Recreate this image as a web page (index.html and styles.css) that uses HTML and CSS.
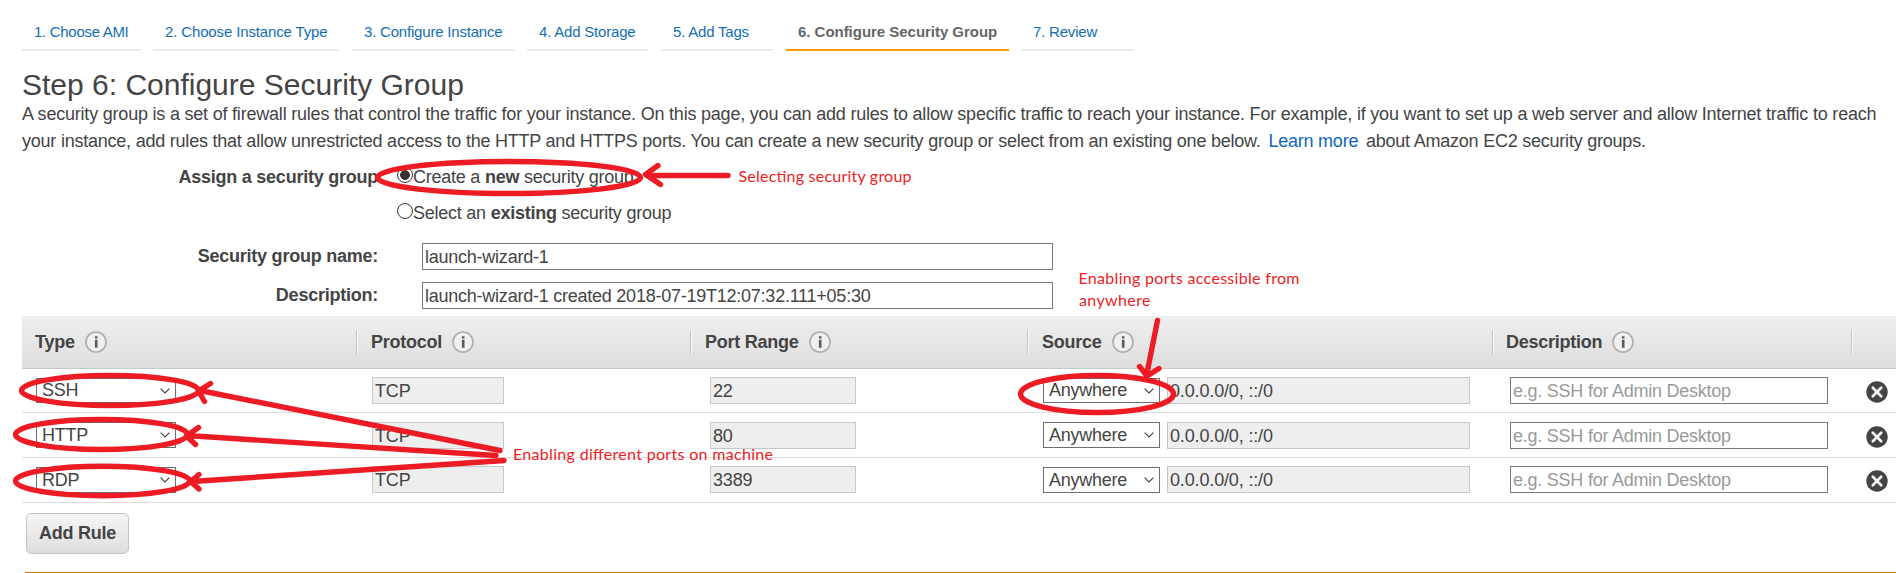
FILE: index.html
```html
<!DOCTYPE html>
<html lang="en">
<head>
<meta charset="utf-8">
<title>Step 6: Configure Security Group</title>
<link rel="stylesheet" href="styles.css">
</head>
<body>
<svg class="defs" width="0" height="0">
  <symbol id="info" viewBox="0 0 22 22"><circle cx="11" cy="11" r="10" fill="#efefef" stroke="#adadad" stroke-width="1.6"/><path d="M9.9 5.2h2.6v2.2H9.9zM9.9 8.8h2.6v8H9.9z" fill="#5a5a5a"/></symbol>
  <symbol id="remove" viewBox="0 0 22 22"><circle cx="11" cy="11" r="10.7" fill="#444"/><path d="M6.800 6.800l8.400 8.400M15.200 6.800l-8.400 8.400" stroke="#f4f4f4" stroke-width="2.700" stroke-linecap="round"/></symbol>
  <symbol id="chev" viewBox="0 0 10 6"><path d="M.6.6L5 5 9.4.6" fill="none" stroke="#444" stroke-width="1.2"/></symbol>
</svg>
<nav class="steps">
  <a class="step s1">1. Choose AMI</a><a class="step s2">2. Choose Instance Type</a><a class="step s3">3. Configure Instance</a><a class="step s4">4. Add Storage</a><a class="step s5">5. Add Tags</a><a class="step s6 active">6. Configure Security Group</a><a class="step s7">7. Review</a>
</nav>
<main>
  <h1>Step 6: Configure Security Group</h1>
  <p class="intro"><span class="lead">A security group is a set of firewall rules that control the traffic for your instance. On this page, you can add rules to allow specific traffic to reach your instance. For example, if you want to set up a web server and allow Internet traffic to reach</span><br>your instance, add rules that allow unrestricted access to the HTTP and HTTPS ports. You can create a new security group or select from an existing one below. <a class="link">Learn more</a> about Amazon EC2 security groups.</p>
  <div class="assign">
    <span class="label">Assign a security group</span>
    <div class="radios">
      <div class="option"><i class="radio on"></i><span>Create a <b>new</b> security group</span></div>
      <div class="option"><i class="radio"></i><span>Select an <b>existing</b> security group</span></div>
    </div>
  </div>
  <div class="field"><span class="label">Security group name:</span><div class="box wide">launch-wizard-1</div></div>
  <div class="field second"><span class="label">Description:</span><div class="box wide">launch-wizard-1 created 2018-07-19T12:07:32.111+05:30</div></div>
  <section class="rules">
    <div class="row head">
      <div class="th">Type<svg class="info"><use href="#info"/></svg></div>
      <div class="th">Protocol<svg class="info"><use href="#info"/></svg></div>
      <div class="th">Port Range<svg class="info"><use href="#info"/></svg></div>
      <div class="th">Source<svg class="info"><use href="#info"/></svg></div>
      <div class="th">Description<svg class="info"><use href="#info"/></svg></div>
      <div class="th"></div>
    </div>
    <div class="row r1">
      <div class="td"><div class="select type">SSH<svg class="chev"><use href="#chev"/></svg></div></div>
      <div class="td"><div class="box off proto">TCP</div></div>
      <div class="td"><div class="box off port">22</div></div>
      <div class="td"><div class="select src">Anywhere<svg class="chev"><use href="#chev"/></svg></div><div class="box off cidr">0.0.0.0/0, ::/0</div></div>
      <div class="td"><div class="box desc">e.g. SSH for Admin Desktop</div></div>
      <div class="td"><svg class="remove"><use href="#remove"/></svg></div>
    </div>
    <div class="row r2">
      <div class="td"><div class="select type">HTTP<svg class="chev"><use href="#chev"/></svg></div></div>
      <div class="td"><div class="box off proto">TCP</div></div>
      <div class="td"><div class="box off port">80</div></div>
      <div class="td"><div class="select src">Anywhere<svg class="chev"><use href="#chev"/></svg></div><div class="box off cidr">0.0.0.0/0, ::/0</div></div>
      <div class="td"><div class="box desc">e.g. SSH for Admin Desktop</div></div>
      <div class="td"><svg class="remove"><use href="#remove"/></svg></div>
    </div>
    <div class="row r3">
      <div class="td"><div class="select type">RDP<svg class="chev"><use href="#chev"/></svg></div></div>
      <div class="td"><div class="box off proto">TCP</div></div>
      <div class="td"><div class="box off port">3389</div></div>
      <div class="td"><div class="select src">Anywhere<svg class="chev"><use href="#chev"/></svg></div><div class="box off cidr">0.0.0.0/0, ::/0</div></div>
      <div class="td"><div class="box desc">e.g. SSH for Admin Desktop</div></div>
      <div class="td"><svg class="remove"><use href="#remove"/></svg></div>
    </div>
  </section>
  <div class="add">Add Rule</div>
  <div class="warning"></div>
</main>
<svg class="notes" width="1896" height="573" viewBox="0 0 1896 573">
  <g class="ink">
    <ellipse cx="509" cy="177.5" rx="131.5" ry="16"/>
    <path d="M728 175.5H647M658 165.5L645.500 174.500L660.500 184.500"/>
    <ellipse cx="110" cy="390.500" rx="88.500" ry="15"/>
    <ellipse cx="101.500" cy="434.500" rx="86" ry="15"/>
    <ellipse cx="102.500" cy="481" rx="87" ry="14.700"/>
    <path d="M500 450.500L200 390.500M210.500 383.500L198.500 391L204.500 401.500"/>
    <path d="M496 455.500L187 435.500M198.500 427.500L186.500 436L195.500 444.500"/>
    <path d="M504 460.500L192 481.500M199 474.500L190.500 481.500L199 489"/>
    <ellipse cx="1097" cy="394" rx="76.500" ry="18.500"/>
    <path d="M1157.500 320.500L1146 378M1139.500 366.500L1147 376L1159 368.500"/>
  </g>
  <g class="note">
    <text x="738.500" y="181.500" textLength="173">Selecting security group</text>
    <text x="1078.500" y="284" textLength="221">Enabling ports accessible from</text>
    <text x="1079" y="306" textLength="71.500">anywhere</text>
    <text x="513" y="460" textLength="260">Enabling different ports on machine</text>
  </g>
</svg>
</body>
</html>
```
FILE: styles.css
```css
* { box-sizing: border-box; }
body { margin: 0; width: 1896px; height: 573px; overflow: hidden; position: relative; background: #fff; color: #444; font-family: "Liberation Sans", Arial, sans-serif; font-size: 18px; }
.defs { position: absolute; }
.steps { display: flex; height: 51px; padding: 14px 0 0 22px; }
.step { height: 37px; padding: 9px 0 0 12px; line-height: 18px; font-size: 15px; letter-spacing: -.2px; color: #146eb4; border-bottom: 2px solid #eaeaea; white-space: nowrap; }
.s1 { width: 119px; margin-right: 12px; letter-spacing: -.3px; }
.s2 { width: 186px; margin-right: 13px; letter-spacing: -.14px; }
.s3 { width: 163px; margin-right: 12px; }
.s4 { width: 121px; margin-right: 13px; }
.s5 { width: 112px; margin-right: 13px; }
.s6 { width: 223px; margin-right: 12px; letter-spacing: -.03px; }
.s7 { width: 113px; }
.step.active { color: #666; font-weight: bold; border-color: #f90; }
main { padding-left: 22px; letter-spacing: -.24px; }
h1 { margin: 0; height: 50px; padding-top: 16px; font-size: 30px; line-height: 36px; font-weight: normal; letter-spacing: 0; }
.intro { margin: 0; height: 60px; line-height: 27px; white-space: nowrap; letter-spacing: -.226px; }
.lead { letter-spacing: -.208px; }
.link { color: #1166bb; margin: 0 3px; }
.assign, .field { display: flex; }
.assign { height: 82px; }
.label { width: 356px; text-align: right; font-weight: bold; line-height: 32px; }
.radios { margin-left: 19px; }
.option { display: flex; height: 36px; line-height: 32px; }
.radio { width: 16px; height: 16px; margin-top: 6px; border: 1px solid #333; border-radius: 50%; background: #fff; }
.radio.on { background: radial-gradient(circle, #333 0 4.500px, #fff 5.200px); }
.field { height: 39px; }
.field .label { line-height: 26px; }
.box { height: 27px; border: 1px solid #7a7a7a; background: #fff; padding-left: 2px; line-height: 26px; white-space: nowrap; }
.wide { width: 631px; margin-left: 44px; }
.second { height: 34px; }
.rules { width: 1874px; }
.row { display: grid; grid-template-columns: 334px 334px 337px 465px 359px 45px; border-bottom: 1px solid #ddd; }
.head { height: 53px; background: linear-gradient(#eee, #dedede); border-color: #c8c8c8; align-items: center; }
.th { height: 24px; display: flex; align-items: center; font-weight: bold; padding-left: 14px; border-left: 1px solid #c4c4c4; box-shadow: inset 1px 0 #fafafa; }
.th:first-child { border: 0; box-shadow: none; padding-left: 13px; }
.th:nth-child(5) { padding-left: 13px; }
.info { width: 22px; height: 22px; margin-left: 10px; }
.td { display: flex; align-items: flex-start; padding: 9px 0 0 14px; }
.r1 { height: 44px; }
.r1 .td { padding-top: 8px; }
.r2, .r3 { height: 45px; }
.r3 .td { padding-top: 8px; }
.select { height: 26px; border: 1px solid #6e6e6e; background: #fff; padding: 0 5px; line-height: 25px; display: flex; justify-content: space-between; align-items: center; }
.r1 .select { height: 25px; margin-top: 1px; }
.r3 .select { margin-top: 1px; }
.chev { width: 10px; height: 6px; }
.type { width: 140px; }
.src { width: 117px; margin-left: 2px; }
.off { background: #eee; border-color: #c8c8c8; letter-spacing: -.15px; }
.proto { width: 132px; margin-left: 2px; }
.port { width: 146px; margin-left: 6px; }
.cidr { width: 303px; margin-left: 7px; }
.desc { width: 318px; margin-left: 4px; color: #999; }
.remove { width: 22px; height: 22px; margin: 4px 0 0 1px; flex: none; }
.add { width: 103px; height: 41px; margin: 10px 0 18px 4px; border: 1px solid #c4c4c4; border-radius: 5px; background: linear-gradient(#f5f5f5, #dedede); font-weight: bold; text-align: center; line-height: 38px; }
.warning { height: 20px; margin-left: 3px; border: 1px solid #dd7700; border-right: 0; }
.notes { position: absolute; left: 0; top: 0; }
.ink { fill: none; stroke: #ed1c24; stroke-width: 5.4px; stroke-linecap: round; stroke-linejoin: round; }
.note { fill: #ed1c24; font-family: Lato, sans-serif; font-size: 16px; }
```
